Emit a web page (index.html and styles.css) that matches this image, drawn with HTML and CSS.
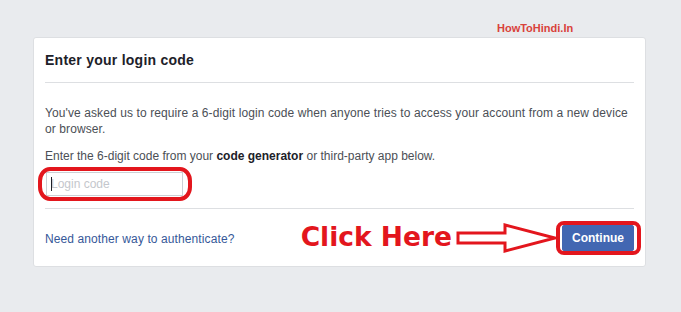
FILE: index.html
```html
<!DOCTYPE html>
<html lang="en">

<head>
<meta charset="UTF-8">
<meta name="viewport" content="width=device-width, initial-scale=1.0">
<title>Enter your login code</title>
<link rel="stylesheet" href="styles.css"></head>

<body>
<div class="watermark">HowToHindi.In</div>

<div class="card">
<!-- Card header -->
<div class="card-header">
<h2>Enter your login code</h2>
</div>

<!-- Card body with explanation and code field -->
<div class="card-body">
<p class="intro">You've asked us to require a 6-digit login code when anyone tries to access your account from a new device or browser.</p>
<p>Enter the 6-digit code from your <strong>code generator</strong> or third-party app below.</p>
<span class="code-field">
<input type="text" placeholder="Login code">
<span class="caret"></span>
</span>
</div>

<!-- Card footer -->
<div class="card-footer">
<a href="#" class="other-way">Need another way to authenticate?</a>
<div class="actions">
<span class="click-here">Click Here</span>
<svg class="arrow" width="102" height="30" viewBox="0 0 102 30">
<polygon points="2,10 49,10 49,2 99,15 49,28 49,20 2,20" fill="#fff" stroke="#e3161d" stroke-width="3" stroke-linejoin="miter"/>
</svg>
<span class="btn-ring">
<button class="btn-continue">Continue</button>
</span>
</div>
</div>
</div>
</body>

</html>
```

FILE: styles.css
```css
body {
font-family: 'Liberation Sans', Arial, sans-serif;
margin: 0;
padding: 37px 0 0 33px;
background-color: #e9ebee;
color: #4b4f56;
font-size: 12px;
}

.watermark {
position: absolute;
left: 497px;
top: 22px;
font-size: 11px;
font-weight: bold;
color: #d9423b;
}

.card {
width: 611px;
background-color: white;
border: 1px solid #dddfe2;
border-radius: 3px;
}

.card-header {
margin: 0 11px;
padding: 13px 0;
border-bottom: 1px solid #dddfe2;
}

.card-header h2 {
margin: 0;
font-size: 14px;
line-height: 18px;
letter-spacing: 0.25px;
color: #1d2129;
}

.card-body {
padding: 22px 11px 12px;
}

.card-body p {
margin: 0 0 11px;
line-height: 16px;
}

.card-body .intro {
max-width: 586px;
letter-spacing: 0.1px;
}

.card-body strong {
color: #1d2129;
}

.code-field {
position: relative;
display: inline-block;
margin-top: -3px;
vertical-align: top;
}

.code-field input {
display: block;
width: 137px;
height: 24px;
padding: 0 4px;
margin: 0 0 0 1px;
box-sizing: border-box;
border: 1px solid #ccd0d5;
font-family: 'Liberation Sans', Arial, sans-serif;
font-size: 12px;
outline: none;
}

.code-field input::placeholder {
color: #c4c7cc;
}

.code-field .caret {
position: absolute;
left: 6px;
top: 5px;
width: 1px;
height: 14px;
background: #1d2129;
}

.code-field::after {
content: '';
position: absolute;
left: -7px;
right: -9px;
top: -5px;
bottom: -5px;
border: 4px solid #e3161d;
border-radius: 12px / 14px;
}

.card-footer {
margin: 0 11px;
padding: 13px 0;
border-top: 1px solid #dddfe2;
display: flex;
justify-content: space-between;
align-items: center;
}

.other-way {
color: #365899;
text-decoration: none;
letter-spacing: 0.1px;
margin-top: 2px;
}

.actions {
display: flex;
align-items: center;
}

.click-here {
font-family: 'DejaVu Sans', sans-serif;
font-weight: bold;
font-size: 26.5px;
line-height: 26px;
color: #e3161d;
margin-bottom: 1px;
}

.arrow {
display: block;
margin: 1px 4px 0 4px;
}

.btn-ring {
position: relative;
display: inline-block;
}

.btn-ring::after {
content: '';
position: absolute;
left: -6px;
right: -7px;
top: -4px;
bottom: -4px;
border: 4px solid #e3161d;
border-radius: 8px;
}

.btn-continue {
display: block;
height: 26px;
padding: 0 9px;
background-color: #4267b2;
border: 1px solid #4267b2;
border-radius: 2px;
color: white;
font-family: 'Liberation Sans', Arial, sans-serif;
font-size: 12px;
font-weight: bold;
}
```
